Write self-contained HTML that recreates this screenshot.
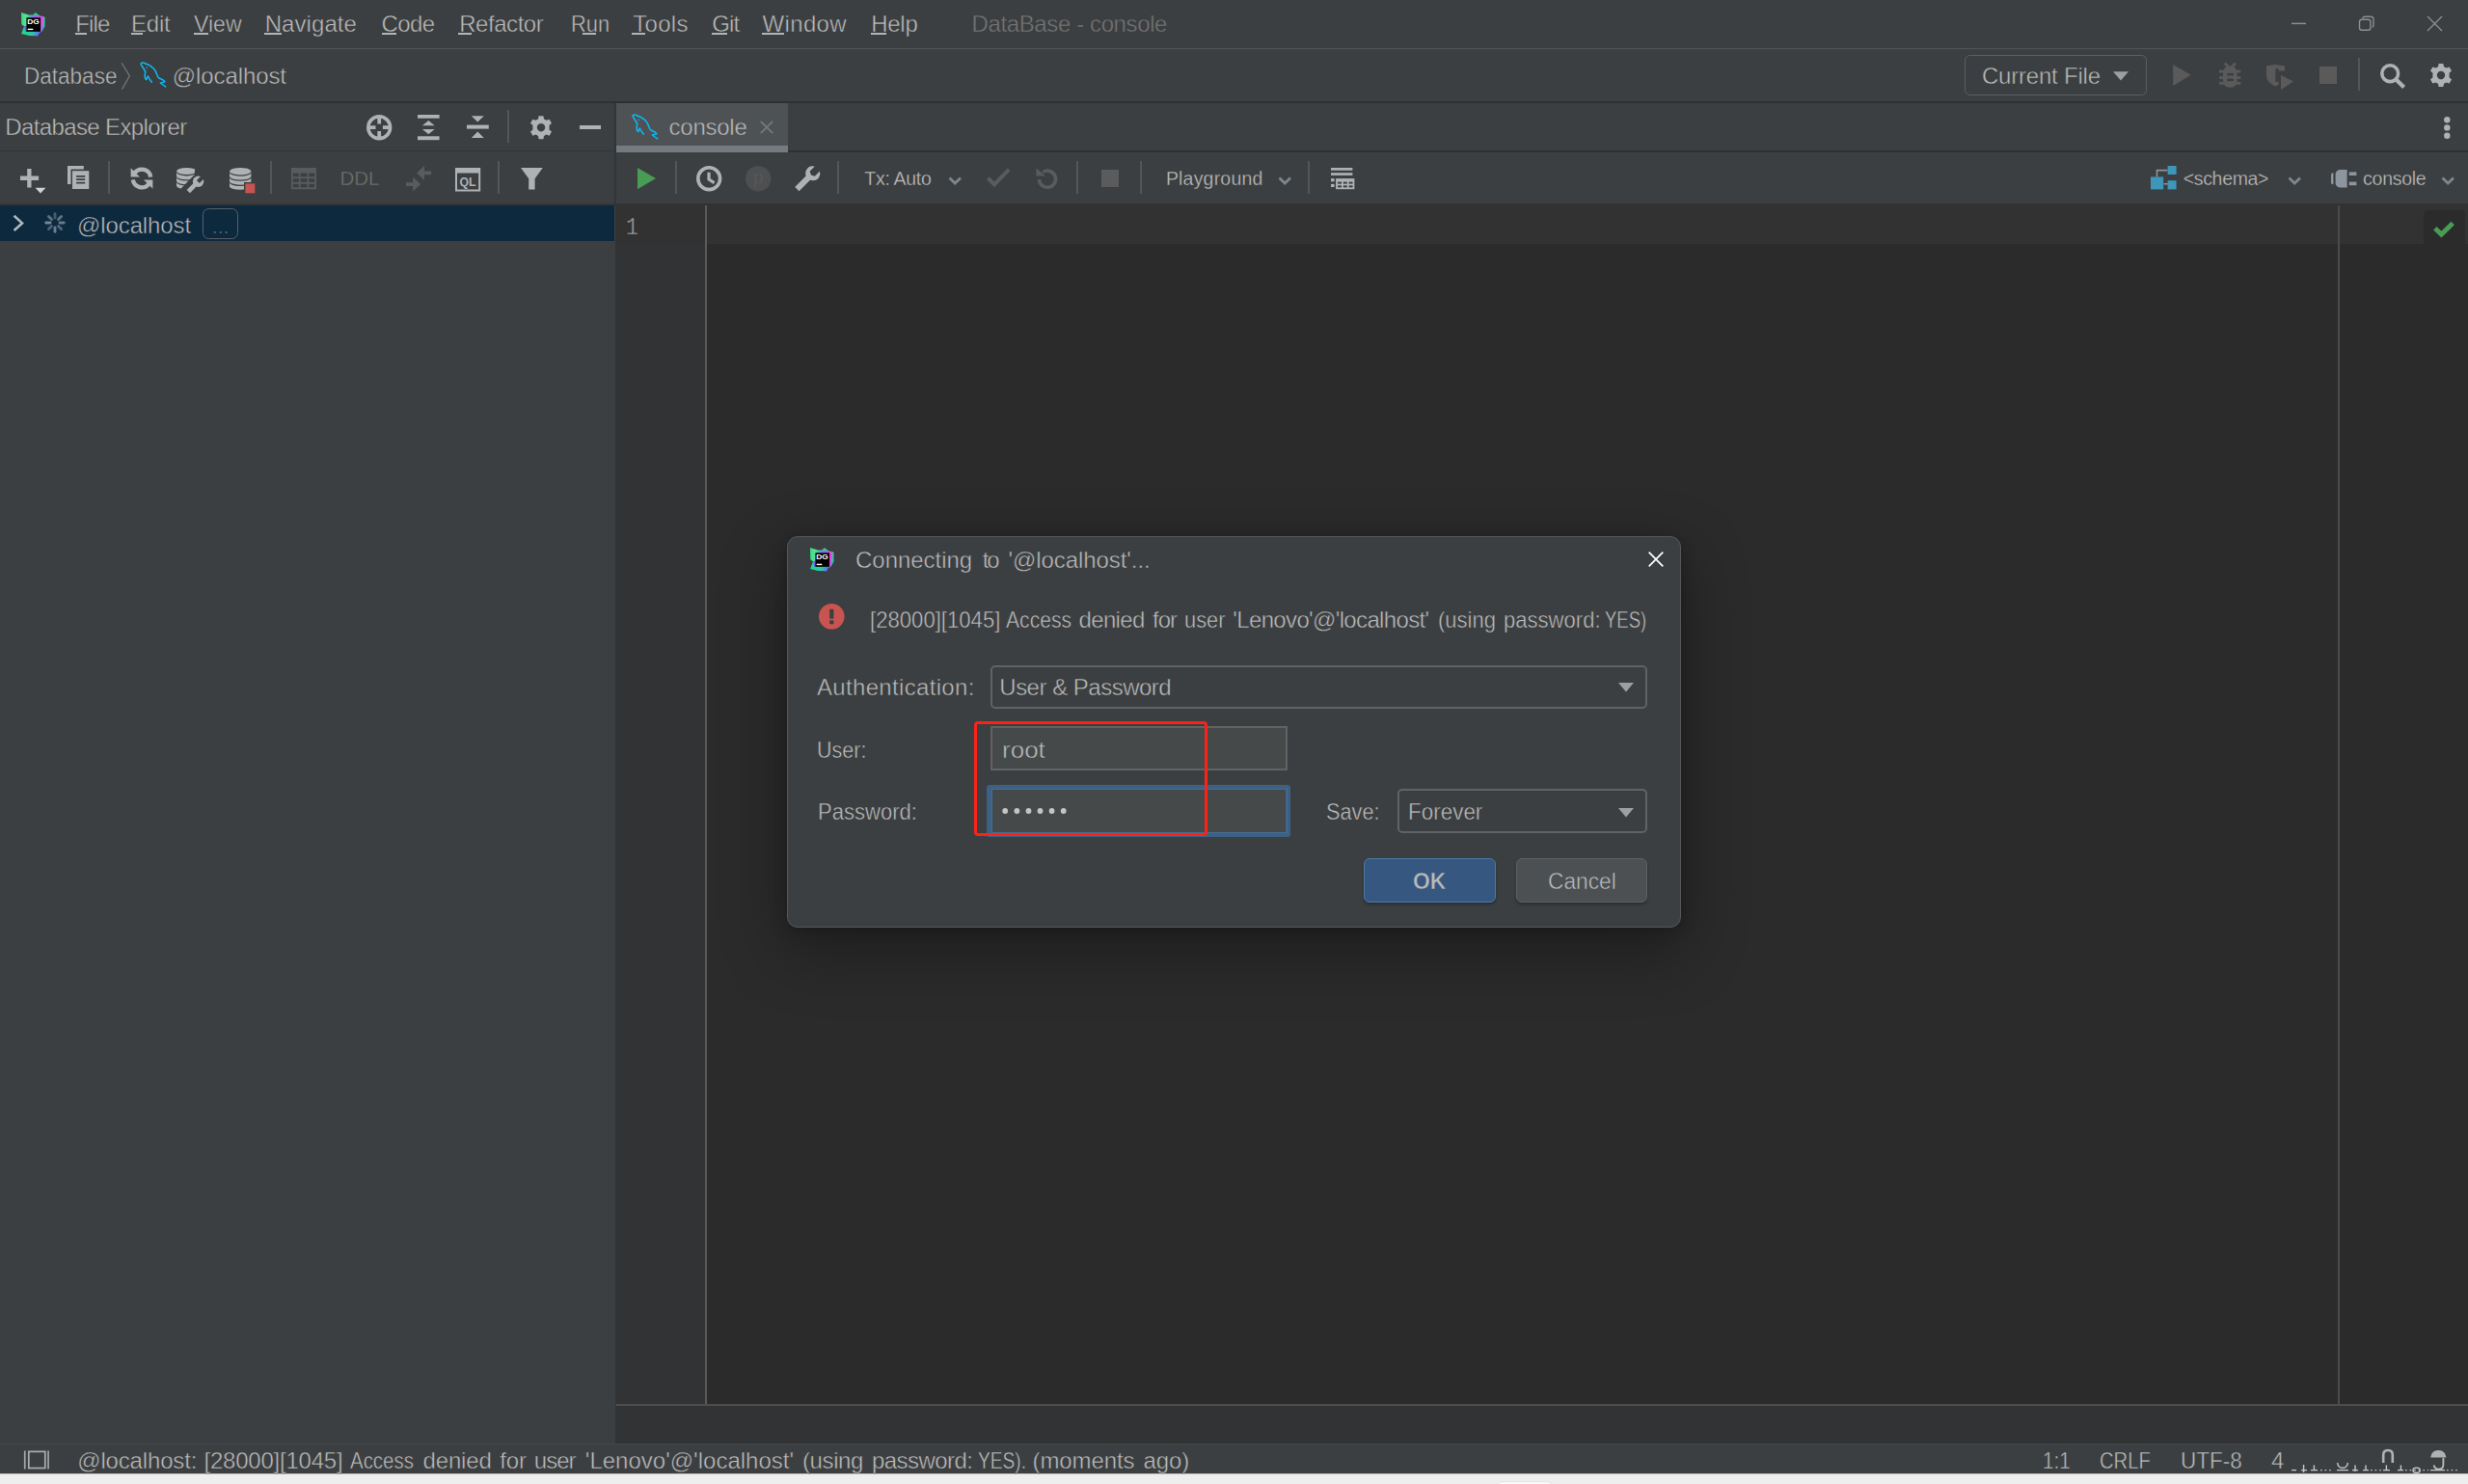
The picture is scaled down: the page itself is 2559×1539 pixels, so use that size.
<!DOCTYPE html>
<html><head><meta charset="utf-8"><title>DataBase - console</title>
<style>
html,body{margin:0;padding:0;background:#3c3f41;}
body{width:2559px;height:1539px;overflow:hidden;font-family:"Liberation Sans",sans-serif;}
#root{position:relative;width:2559px;height:1539px;overflow:hidden;background:#3c3f41;}
#root div,#root svg,#root span{position:absolute;}
.t{white-space:pre;line-height:1;}
.t u{text-decoration:underline;text-decoration-thickness:1.8px;text-underline-offset:1.2px;text-decoration-skip-ink:none;}
.sep{width:2px;background:#555555;}
svg{overflow:visible;}

</style></head>
<body>
<div id="root">
<!-- ===== frame lines ===== -->
<div style="left:0;top:49.7px;width:2559px;height:1.5px;background:#525456"></div>
<div style="left:0;top:105px;width:2559px;height:2px;background:#2e3032"></div>
<!-- left panel -->
<div style="left:0;top:156.1px;width:637px;height:1.3px;background:#323436"></div>
<div style="left:0;top:210.5px;width:637px;height:2.5px;background:#323436"></div>
<div style="left:0;top:213px;width:637px;height:37px;background:#0d293e"></div>
<div style="left:637px;top:107px;width:2px;height:105.5px;background:#323436"></div>
<!-- editor area -->
<div style="left:639px;top:107px;width:1920px;height:49px;background:#3c3f41"></div>
<div style="left:639px;top:107px;width:178px;height:51px;background:#4e5254"></div>
<div style="left:639px;top:151px;width:178px;height:7px;background:#747a80"></div>
<div style="left:817px;top:156px;width:1742px;height:2px;background:#2e3032"></div>
<div style="left:637.8px;top:211px;width:1921.2px;height:1246px;background:#2b2b2b"></div>
<div style="left:637.8px;top:211px;width:94.2px;height:1246px;background:#313335"></div>
<div style="left:637.8px;top:211px;width:94.2px;height:42px;background:#323233"></div>
<div style="left:733px;top:211px;width:1826px;height:42px;background:#323232"></div>
<div style="left:731px;top:213px;width:2px;height:1244px;background:#5a5a5a"></div>
<div style="left:2424px;top:213px;width:2px;height:1244px;background:#4b4b4b"></div>
<div style="left:639px;top:1456px;width:1920px;height:2px;background:#4d4d4d"></div>
<div style="left:637.8px;top:1458px;width:1921.2px;height:39px;background:#313335"></div>
<!-- inspection widget -->
<div style="left:2512.6px;top:217.6px;width:43.7px;height:35.6px;background:#2b2b2b;border-radius:5px 5px 0 0"></div>
<svg style="left:2520px;top:225px" width="30" height="26" viewBox="0 0 30 26"><path d="M4.8,11.7 L11.4,18 L23.2,6.5" fill="none" stroke="#499c54" stroke-width="5"/></svg>
<!-- status bar -->
<div style="left:0;top:1497px;width:2559px;height:31px;background:#3c3f41"></div>
<div style="left:0;top:1497.2px;width:2559px;height:1.2px;background:#44474a"></div>
<div style="left:0;top:1527.7px;width:2559px;height:11.3px;background:#eeeeee"></div>
<div style="left:0;top:1527.6px;width:2559px;height:1.8px;background:#bdbdbd"></div>
<div style="left:1552.8px;top:1536.3px;width:56px;height:8px;background:#f8f8f8;border:1px solid #e4e4e4;border-radius:4px;box-sizing:border-box"></div>

<!-- ===== DG logo (title) ===== -->
<svg style="left:21.7px;top:12.9px" width="24.5" height="24.3" viewBox="0 0 24.5 24.3">
<defs>
<linearGradient id="lgA" x1="0" y1="0" x2="1" y2="0"><stop offset="0" stop-color="#38dc86"/><stop offset="0.2" stop-color="#5ee090"/><stop offset="0.45" stop-color="#21d789"/><stop offset="1" stop-color="#21d789"/></linearGradient>
<linearGradient id="lgB" x1="0" y1="0" x2="1" y2="0"><stop offset="0" stop-color="#21d789"/><stop offset="0.55" stop-color="#2fc3ac"/><stop offset="0.8" stop-color="#5a78f5"/><stop offset="1" stop-color="#6b57ff"/></linearGradient>
<linearGradient id="lgC" x1="0" y1="0" x2="1" y2="0"><stop offset="0" stop-color="#21d789" stop-opacity="0"/><stop offset="0.35" stop-color="#8a7aec"/><stop offset="0.7" stop-color="#b552f2"/><stop offset="1" stop-color="#e244f0"/></linearGradient>
<linearGradient id="lgD" x1="0" y1="0" x2="0" y2="1"><stop offset="0" stop-color="#f640f2"/><stop offset="1" stop-color="#c455f2"/></linearGradient>
<linearGradient id="lgE" x1="0" y1="0" x2="0" y2="1"><stop offset="0" stop-color="#21d789"/><stop offset="0.6" stop-color="#2bc9a0"/><stop offset="1" stop-color="#5a7df5"/></linearGradient>
<g id="dglogo">
<path d="M0,0 L8.1,2.4 L12.3,2.5 L14.7,0.1 L19.5,3.4 L23.3,4.2 L24.3,5 L24.3,14.6 L21.5,19.6 L6,19.8 L3,14.2 L0.3,12.3Z" fill="url(#lgA)"/>
<path d="M23.2,4.3 L24.4,5.1 L24.3,14.6 L21.8,19 L22.6,12Z" fill="url(#lgE)"/>
<path d="M3,14.2 L0.1,21.9 L8.1,23.9 L17.3,24.2 L18.3,21.7 L21.5,19.6 L5.4,19.2 L5.4,14Z" fill="url(#lgB)"/>
<path d="M3.1,14.3 L5.6,13.6 L5.6,19.9 L4.2,19.4Z" fill="#7358fa"/>
<path d="M6,3.2 L12.3,2.6 L20,3.8 L20.4,5.7 L6,5.7Z" fill="url(#lgC)"/>
<path d="M20,4.2 L23.4,4.3 L22.6,12 L21.4,19.6 L20,19.9Z" fill="url(#lgD)"/>
<rect x="5.4" y="5.3" width="14.7" height="14.5" fill="#000"/>
<text x="6.3" y="12" font-family="Liberation Sans" font-weight="700" font-size="7.2" fill="#fff" textLength="12.6" lengthAdjust="spacingAndGlyphs">DG</text>
<rect x="6.7" y="16.7" width="5.6" height="1.4" fill="#fff"/>
</g>
</defs>
<use href="#dglogo"/>
</svg>

<!-- mnemonic underlines -->
<div style="left:78px;top:34.2px;width:12.1px;height:1.8px;background:#b4b4b4"></div>
<div style="left:135.9px;top:34.2px;width:11.9px;height:1.8px;background:#b4b4b4"></div>
<div style="left:201px;top:34.2px;width:14.9px;height:1.8px;background:#b4b4b4"></div>
<div style="left:274px;top:34.2px;width:17.7px;height:1.8px;background:#b4b4b4"></div>
<div style="left:396px;top:34.2px;width:14.7px;height:1.8px;background:#b4b4b4"></div>
<div style="left:475.4px;top:34.2px;width:13.3px;height:1.8px;background:#b4b4b4"></div>
<div style="left:604.1px;top:34.2px;width:13.6px;height:1.8px;background:#b4b4b4"></div>
<div style="left:655.1px;top:34.2px;width:13.9px;height:1.8px;background:#b4b4b4"></div>
<div style="left:738.1px;top:34.2px;width:15.8px;height:1.8px;background:#b4b4b4"></div>
<div style="left:790px;top:34.2px;width:22.9px;height:1.8px;background:#b4b4b4"></div>
<div style="left:903px;top:34.2px;width:16px;height:1.8px;background:#b4b4b4"></div>
<!-- window controls -->
<svg style="left:2374px;top:14px" width="170" height="22" viewBox="0 0 170 22">
<path d="M2,10.4 H17" stroke="#8c8e90" stroke-width="1.5" fill="none"/>
<rect x="72.5" y="6.3" width="11.4" height="11" rx="2.5" fill="none" stroke="#8c8e90" stroke-width="1.4"/>
<path d="M76,5.6 V5.2 Q76,3.2 78.4,3.2 H84.2 Q87,3.2 87,6 V12 Q87,13.8 85.6,14.2" fill="none" stroke="#8c8e90" stroke-width="1.4"/>
<path d="M143,3 L158,18 M158,3 L143,18" stroke="#8c8e90" stroke-width="1.3" fill="none"/>
</svg>

<!-- nav bar -->
<svg style="left:124px;top:63px" width="14" height="32" viewBox="0 0 14 32"><path d="M2.2,2.4 L10.4,15.7 L2.5,29.6" fill="none" stroke="#6e7173" stroke-width="1.4"/></svg>
<svg class="dolph" style="left:144.5px;top:64.4px" width="28" height="27" viewBox="0 0 28 27"><path d="M1.1,1.9 Q2.5,0.6 4.5,1.2 Q6.5,2.3 8.4,3 Q10.8,4 12.6,5.6 Q14.6,7.2 15.9,9.2 Q17,11.2 17.8,13.4 Q18.4,15.4 19.4,16.6 Q20.8,17.6 22.7,18.3 Q24.8,19.3 25.9,20.7 L21.4,22 Q24,24 26.7,25.9 M1.1,1.9 Q1.2,3 1.9,4 L3.9,7.2 L5.8,10.5 Q5.2,12.5 5.2,14.4 Q5.2,16.2 5.7,17.6 Q6.2,18.4 6.8,18.6 Q7.5,16.6 8.4,15 Q9.2,16.6 10,17.9 L12.3,21.2" fill="none" stroke="#0db7f4" stroke-width="1.55" stroke-linejoin="round" stroke-linecap="round"/><circle cx="7.3" cy="6.3" r="0.8" fill="#0db7f4"/></svg>

<!-- Current File box + run toolbar -->
<div style="left:2037.3px;top:57.2px;width:188.6px;height:41.5px;box-sizing:border-box;border:1.9px solid #5c5f61;border-radius:5.5px"></div>
<svg style="left:2190px;top:74px" width="18" height="10" viewBox="0 0 18 10"><path d="M1,0.3 H17 L9,9.6Z" fill="#9da0a3"/></svg>
<svg style="left:2253px;top:66px" width="20" height="24" viewBox="0 0 20 24"><path d="M0.2,0.9 L18.8,11.8 L0.2,23Z" fill="#5a5a5a"/></svg>
<!-- bug -->
<svg style="left:2301.2px;top:64.9px" width="22.3" height="25.7" viewBox="0 0 22.3 25.7" fill="#5a5a5a">
<path d="M5.7,0.4 L10.1,4.9 M17,0.4 L12.6,4.9" stroke="#5a5a5a" stroke-width="2.8" fill="none"/>
<path d="M4,12 Q4,3.6 11.25,3.6 Q18.5,3.6 18.5,12 V18 Q18.5,25.7 11.25,25.7 Q4,25.7 4,18Z"/>
<rect x="0" y="7.7" width="22.3" height="2.8"/><rect x="0" y="14.2" width="22.3" height="2.8"/><rect x="0" y="19.9" width="22.3" height="2.8"/>
<rect x="8.1" y="10.9" width="6.9" height="2.5" fill="#3c3f41"/><rect x="8.1" y="16.6" width="6.9" height="2.5" fill="#3c3f41"/>
</svg>
<!-- coverage -->
<svg style="left:2349.8px;top:66.9px" width="28" height="26" viewBox="0 0 28 26" fill="#5a5a5a">
<path d="M0,1.3 Q5,1 9.3,0 Q14,1 19,1.3 V6.6 H12.6 V4.2 H9.3 V17.8 H12.6 V20.8 Q11,22 9.3,22.4 Q0,18.5 0,11Z"/>
<path d="M15,10.9 L28,17.4 L15,25.9Z"/>
</svg>
<div style="left:2404.9px;top:68.8px;width:18.2px;height:18.4px;background:#5a5a5a"></div>
<div class="sep" style="left:2445px;top:60px;height:34px;width:1.5px"></div>
<svg style="left:2466.5px;top:64.7px" width="28" height="28" viewBox="0 0 28 28"><circle cx="11.2" cy="11.2" r="8.4" fill="none" stroke="#afb1b3" stroke-width="3.6"/><path d="M17.2,17.2 L25.6,25.6" stroke="#afb1b3" stroke-width="4.2"/></svg>
<svg style="left:2519px;top:66px" width="24" height="24" viewBox="0 0 24 24"><use href="#gear"/></svg>

<!-- ===== Database Explorer header icons ===== -->
<svg width="0" height="0" style="left:0;top:0"><defs>
<path id="gear" fill="#afb1b3" fill-rule="evenodd" d="M9.6,0 H14.4 L15,3.3 Q16.3,3.8 17.4,4.6 L20.6,3.5 L23,7.6 L20.5,9.8 Q20.7,11 20.5,14.2 L23,16.4 L20.6,20.5 L17.4,19.4 Q16.3,20.2 15,20.7 L14.4,24 H9.6 L9,20.7 Q7.7,20.2 6.6,19.4 L3.4,20.5 L1,16.4 L3.5,14.2 Q3.3,12 3.5,9.8 L1,7.6 L3.4,3.5 L6.6,4.6 Q7.7,3.8 9,3.3Z M12,7.8 A4.2,4.2 0 1 0 12.01,7.8Z"/>
<path id="chev" d="M1.5,1.5 L7.2,7 L13,1.5" fill="none" stroke="#7c8791" stroke-width="2.8"/>
</defs></svg>
<svg style="left:379.9px;top:119px" width="26.4" height="26.4" viewBox="0 0 26.4 26.4"><circle cx="13.2" cy="13.2" r="11.4" fill="none" stroke="#afb1b3" stroke-width="3.6"/><path d="M13.2,2 V9.5 M13.2,16.9 V24.4 M2,13.2 H9.5 M16.9,13.2 H24.4" stroke="#afb1b3" stroke-width="3.7"/></svg>
<svg style="left:432.8px;top:119px" width="22.6" height="26.2" viewBox="0 0 22.6 26.2" fill="#afb1b3"><rect x="0" y="0" width="22.6" height="3.7"/><rect x="0" y="22.3" width="22.6" height="3.9"/><path d="M11.3,6 L17.7,11.2 H4.9Z M4.9,15.1 H17.7 L11.3,20.3Z"/></svg>
<svg style="left:483.7px;top:120.2px" width="22.8" height="23" viewBox="0 0 22.8 23" fill="#afb1b3"><rect x="0" y="9.6" width="22.8" height="4"/><path d="M4.8,0.2 H17.8 L11.3,6.6Z M11.3,16.4 L17.8,22.9 H4.8Z"/></svg>
<div class="sep" style="left:526px;top:114px;height:34px;width:1.6px"></div>
<svg style="left:549px;top:120px" width="24" height="24.4" viewBox="0 0 24 24"><use href="#gear"/></svg>
<div style="left:600.8px;top:130.1px;width:22.4px;height:4px;background:#afb1b3"></div>

<!-- ===== Explorer toolbar ===== -->
<svg style="left:20.6px;top:175.3px" width="28" height="27" viewBox="0 0 28 27"><path d="M0,7.6 H19.1 V11.9 H0Z M7.2,0 H11.5 V19.4 H7.2Z" fill="#afb1b3"/><path d="M15.6,19.7 H26.4 L21,25.6Z" fill="#d2d2d2"/></svg>
<svg style="left:69.9px;top:171.8px" width="22.5" height="24.2" viewBox="0 0 22.5 24.2"><path d="M0,0 H16.8 V3.5 H3.5 V19 H0Z" fill="#afb1b3"/><rect x="5" y="5.2" width="17.3" height="18.8" fill="#afb1b3"/><path d="M9.1,10.8 H18.2 M9.1,14.2 H18.2 M9.1,17.6 H18.2" stroke="#3c3f41" stroke-width="1.8"/></svg>
<div class="sep" style="left:112.2px;top:167px;height:34px;width:1.6px"></div>
<!-- refresh -->
<svg style="left:135px;top:173px" width="24" height="24" viewBox="-12 -12 24 24"><g id="rfh"><path d="M9.23,-1.46 A9.35,9.35 0 0 0 -7.4,-5.7" fill="none" stroke="#afb1b3" stroke-width="4.3"/><path d="M-11.4,-10.7 V-1.5 H-2Z" fill="#afb1b3"/></g><use href="#rfh" transform="rotate(180)"/></svg>
<!-- db wrench -->
<svg style="left:182.7px;top:173.5px" width="30" height="27" viewBox="0 0 30 27"><defs><clipPath id="cw"><path d="M-1,-1 H19.3 L18.6,7.2 L3.2,23 H-1Z"/></clipPath></defs><g fill="#afb1b3" clip-path="url(#cw)"><ellipse cx="10.5" cy="3.55" rx="10.5" ry="3.55"/><path d="M0,4.85 A10.5,3.55 0 0 0 21.0,4.85 V8.65 A10.5,3.55 0 0 1 0,8.65Z"/><path d="M0,9.95 A10.5,3.55 0 0 0 21.0,9.95 V13.75 A10.5,3.55 0 0 1 0,13.75Z"/><path d="M0,15.05 A10.5,3.55 0 0 0 21.0,15.05 V18.85 A10.5,3.55 0 0 1 0,18.85Z"/></g>
<path d="M12.3,24.6 L21.4,15.4" stroke="#afb1b3" stroke-width="4.6" fill="none"/><circle cx="22.6" cy="14.2" r="5.7" fill="#afb1b3"/><path d="M22.4,14.4 L28.4,8.4" stroke="#3c3f41" stroke-width="4.2" fill="none"/></svg>
<!-- db stop -->
<svg style="left:237.6px;top:173.5px" width="27" height="27" viewBox="0 0 27 27"><g fill="#afb1b3"><ellipse cx="11.2" cy="3.7" rx="11.2" ry="3.7"/><path d="M0,5.00 A11.2,3.7 0 0 0 22.4,5.00 V8.85 A11.2,3.7 0 0 1 0,8.85Z"/><path d="M0,10.15 A11.2,3.7 0 0 0 22.4,10.15 V14.00 A11.2,3.7 0 0 1 0,14.00Z"/><path d="M0,15.30 A11.2,3.7 0 0 0 22.4,15.30 V19.15 A11.2,3.7 0 0 1 0,19.15Z"/></g><rect x="15" y="15" width="12" height="12" fill="#3c3f41"/><rect x="16.4" y="16.4" width="9.9" height="9.9" fill="#c75450"/></svg>
<div class="sep" style="left:280px;top:167px;height:34px;width:1.6px"></div>
<!-- table disabled -->
<svg style="left:302px;top:173.9px" width="26" height="22.2" viewBox="0 0 26 22.2"><rect width="26" height="22.2" fill="#595b5d"/><g fill="#3c3f41"><rect x="1.8" y="5.6" width="6" height="3.6"/><rect x="9.6" y="5.6" width="6.8" height="3.6"/><rect x="18.2" y="5.6" width="6" height="3.6"/><rect x="1.8" y="11.2" width="6" height="3.6"/><rect x="9.6" y="11.2" width="6.8" height="3.6"/><rect x="18.2" y="11.2" width="6" height="3.6"/><rect x="1.8" y="16.8" width="6" height="3.6"/><rect x="9.6" y="16.8" width="6.8" height="3.6"/><rect x="18.2" y="16.8" width="6" height="3.6"/></g></svg>
<!-- arrows disabled -->
<svg style="left:421px;top:171.8px" width="26.2" height="26.4" viewBox="0 0 26.2 26.4" fill="#595b5d"><path d="M26.2,5.4 H19 V0 L11,7.4 L19,14.8 V9.2 H26.2Z"/><path d="M0,17.2 H7.2 V11.6 L15.2,19 L7.2,26.4 V21 H0Z"/></svg>
<!-- QL -->
<svg style="left:471.9px;top:173.9px" width="26.2" height="24.4" viewBox="0 0 26.2 24.4"><path d="M0,0 H26.2 V24.4 H0Z M2,5.6 V22.4 H24.2 V5.6Z" fill="#afb1b3" fill-rule="evenodd"/><text x="4.6" y="19" font-family="Liberation Sans" font-weight="700" font-size="12.3" fill="#afb1b3" textLength="17" lengthAdjust="spacingAndGlyphs">QL</text></svg>
<div class="sep" style="left:516px;top:167px;height:34px;width:1.6px"></div>
<!-- funnel -->
<svg style="left:539.7px;top:173.9px" width="22.8" height="22.4" viewBox="0 0 22.8 22.4"><path d="M0,0 H22.8 L14.6,11.2 V22.4 H8.2 V11.2Z" fill="#afb1b3"/></svg>

<!-- ===== tree row ===== -->
<svg style="left:12px;top:221px" width="14" height="20" viewBox="0 0 14 20"><path d="M2.6,2.8 L11,10.4 L2.6,18" fill="none" stroke="#b4b6b8" stroke-width="2.6"/></svg>
<svg style="left:45px;top:219px" width="24" height="24" viewBox="0 0 24 24" stroke-width="2.9" stroke-linecap="round" fill="none"><path d="M12.00,7.10 L12.00,2.80" stroke="#465c6e"/><path d="M15.46,8.54 L18.51,5.49" stroke="#5f7384"/><path d="M16.90,12.00 L21.20,12.00" stroke="#66798a"/><path d="M15.46,15.46 L18.51,18.51" stroke="#52667a"/><path d="M12.00,16.90 L12.00,21.20" stroke="#6b7d8c"/><path d="M8.54,15.46 L5.49,18.51" stroke="#4d6175"/><path d="M7.10,12.00 L2.80,12.00" stroke="#778896"/><path d="M8.54,8.54 L5.49,5.49" stroke="#5c7082"/></svg>
<div style="left:210px;top:215.9px;width:36.9px;height:32.3px;box-sizing:border-box;border:1.8px solid #566069;border-radius:6.5px"></div>

<!-- ===== editor tab ===== -->
<svg class="dolph" style="left:655px;top:117.9px" width="28" height="27" viewBox="0 0 28 27"><path d="M1.1,1.9 Q2.5,0.6 4.5,1.2 Q6.5,2.3 8.4,3 Q10.8,4 12.6,5.6 Q14.6,7.2 15.9,9.2 Q17,11.2 17.8,13.4 Q18.4,15.4 19.4,16.6 Q20.8,17.6 22.7,18.3 Q24.8,19.3 25.9,20.7 L21.4,22 Q24,24 26.7,25.9 M1.1,1.9 Q1.2,3 1.9,4 L3.9,7.2 L5.8,10.5 Q5.2,12.5 5.2,14.4 Q5.2,16.2 5.7,17.6 Q6.2,18.4 6.8,18.6 Q7.5,16.6 8.4,15 Q9.2,16.6 10,17.9 L12.3,21.2" fill="none" stroke="#0db7f4" stroke-width="1.55" stroke-linejoin="round" stroke-linecap="round"/><circle cx="7.3" cy="6.3" r="0.8" fill="#0db7f4"/></svg>
<svg style="left:788px;top:125.4px" width="14" height="14" viewBox="0 0 14 14"><path d="M0.8,0.8 L13.2,13.2 M13.2,0.8 L0.8,13.2" stroke="#6f7c7d" stroke-width="1.8" fill="none"/></svg>
<svg style="left:2533.8px;top:120.6px" width="6.6" height="23" viewBox="0 0 6.6 23" fill="#afb1b3"><circle cx="3.3" cy="3.2" r="3.2"/><circle cx="3.3" cy="11.4" r="3.2"/><circle cx="3.3" cy="19.8" r="3.2"/></svg>

<!-- ===== editor toolbar ===== -->
<svg style="left:661.2px;top:173.9px" width="19" height="22.2" viewBox="0 0 19 22.2"><path d="M0,0 L19,11.1 L0,22.2Z" fill="#499c54"/></svg>
<div class="sep" style="left:700px;top:167px;height:34px;width:1.6px"></div>
<svg style="left:721.9px;top:171.8px" width="26.4" height="26.4" viewBox="0 0 26.4 26.4"><circle cx="13.2" cy="13.2" r="11.4" fill="none" stroke="#afb1b3" stroke-width="3.6"/><path d="M13,6.8 V14 L18.6,17.6" fill="none" stroke="#afb1b3" stroke-width="3.2"/></svg>
<svg style="left:772.8px;top:171.8px" width="26.4" height="26.4" viewBox="0 0 26.4 26.4"><circle cx="13.2" cy="13.2" r="13.2" fill="#4d4f51"/><text x="8" y="18.2" font-family="Liberation Sans" font-size="19" fill="#56585a">p</text></svg>
<!-- wrench -->
<svg style="left:823.9px;top:171.8px" width="26.4" height="26.4" viewBox="0 0 26.4 26.4"><path d="M0.2,22 L11.6,10.6 Q10,4.4 15,1 Q17.6,-0.4 20.8,0.6 L15.6,5.8 L17,9.6 L20.8,10.8 L26,5.6 Q27,9.2 25.2,12 Q22,16.4 16,14.8 L4.6,26.2Z" fill="#afb1b3"/></svg>
<div class="sep" style="left:868px;top:167px;height:34px;width:1.6px"></div>
<svg style="left:983px;top:182.8px" width="14.6" height="9.6" viewBox="0 0 14.6 9.6"><use href="#chev"/></svg>
<svg style="left:1023.1px;top:174.3px" width="24.8" height="19.8" viewBox="0 0 24.8 19.8"><path d="M1.4,10.6 L8,17.4 L23.2,1.6" fill="none" stroke="#595b5d" stroke-width="4"/></svg>
<svg style="left:1073.5px;top:174px" width="23" height="22" viewBox="0 0 23 22"><path d="M3.4,12.2 A8.6,8.6 0 1 0 7.4,4.4" fill="none" stroke="#595b5d" stroke-width="3.6"/><path d="M0.4,0.2 L10,8.6 H0.4Z" fill="#595b5d"/></svg>
<div class="sep" style="left:1116.3px;top:167px;height:34px;width:1.6px"></div>
<div style="left:1142px;top:175.9px;width:18.4px;height:18.3px;background:#595b5d"></div>
<div class="sep" style="left:1182.1px;top:167px;height:34px;width:1.6px"></div>
<svg style="left:1325px;top:182.8px" width="14.6" height="9.6" viewBox="0 0 14.6 9.6"><use href="#chev"/></svg>
<div class="sep" style="left:1356.2px;top:167px;height:34px;width:1.6px"></div>
<svg style="left:1379.7px;top:173.9px" width="24.4" height="22.2" viewBox="0 0 24.4 22.2"><g fill="#afb1b3"><rect x="0" y="0" width="22.4" height="2.7"/><rect x="0" y="5.2" width="22.4" height="2.7"/><rect x="0" y="11.1" width="3.6" height="3.2"/><rect x="0" y="16.9" width="3.6" height="3.1"/><rect x="5.1" y="11.1" width="19.3" height="11.1"/></g><g fill="#3c3f41"><rect x="7" y="14.6" width="4" height="2"/><rect x="12.8" y="14.6" width="4" height="2"/><rect x="18.6" y="14.6" width="4" height="2"/><rect x="7" y="18.4" width="4" height="2"/><rect x="12.8" y="18.4" width="4" height="2"/><rect x="18.6" y="18.4" width="4" height="2"/></g></svg>
<!-- schema icon -->
<svg style="left:2229.8px;top:172px" width="26.6" height="24.4" viewBox="0 0 26.6 24.4"><path d="M6.5,11.5 V4.6 H17.5 M13.6,18.8 H19" fill="none" stroke="#8d9499" stroke-width="1.6"/><rect x="17.6" y="0" width="9" height="9" fill="#3e96b9"/><rect x="0" y="11.4" width="13.2" height="13" fill="#3e96b9"/><rect x="17.6" y="15.2" width="9" height="9.2" fill="#3e96b9"/></svg>
<svg style="left:2371.7px;top:183px" width="14.6" height="9.6" viewBox="0 0 14.6 9.6"><use href="#chev"/></svg>
<!-- plug icon -->
<svg style="left:2417px;top:175.5px" width="26.4" height="18.6" viewBox="0 0 26.4 18.6" fill="#8d969e"><path d="M0,5 Q0,3.4 2.4,3.2 V15.4 Q0,15.2 0,13.6Z"/><path d="M4.6,4 Q5.4,0.6 9,0 H16.6 V18.6 H9 Q5.4,18 4.6,14.6Z"/><rect x="18.8" y="2.4" width="7.6" height="3.6"/><rect x="18.8" y="12.6" width="7.6" height="3.6"/></svg>
<svg style="left:2530.7px;top:183px" width="14.6" height="9.6" viewBox="0 0 14.6 9.6"><use href="#chev"/></svg>

<!-- ===== status bar icons ===== -->
<svg style="left:24px;top:1504px" width="28" height="20" viewBox="0 0 28 20"><path d="M1.75,0.5 V19.4 M26.05,0.5 V19.4" stroke="#a4a6a8" stroke-width="1.7"/><rect x="5.8" y="1.4" width="17" height="17.1" fill="none" stroke="#a9abad" stroke-width="1.75"/></svg>
<!-- clipped right-side fragments -->
<svg style="left:2370px;top:1500px" width="180" height="28" viewBox="0 0 180 28">
<path d="M101.2,17 V9 Q101.2,4 106,4 Q110.8,4 110.8,9 V17" fill="none" stroke="#afb1b3" stroke-width="2.6"/>
<path d="M150.2,11.6 Q151,4 158.2,4 Q165.6,4 166.4,11.6Z" fill="#afb1b3"/>
<path d="M163.4,12 V19 Q163.4,23.6 158.6,23.6 Q154.4,23.6 153.6,19.5" fill="none" stroke="#bbbbbb" stroke-width="1.8"/>
<path d="M53.6,17 Q54.4,22.4 59,22.4 Q63.6,22.4 64.4,17" fill="none" stroke="#bbbbbb" stroke-width="1.6"/>
<path d="M6,24.6 H11 M16,24.6 H22 M26,24.6 H33 M53,24.6 H65 M69,24.6 H75 M80,24.6 H86 M101,24.6 H108 M116,24.6 H122 M150,24.6 H165" stroke="#c8c8c8" stroke-width="1.4"/>
<path d="M18.6,19 V27 M29.4,19.6 V24.6 M72,19.6 V26 M83,19.6 V24.6 M104.4,19.6 V24.6 M119.4,19.6 V24.6" stroke="#c8c8c8" stroke-width="1.4"/>
<path d="M36,24.6 H48 M88,24.6 H100 M124,24.6 H148 M167,24.6 H178" stroke="#c8c8c8" stroke-width="1.2" stroke-dasharray="1.6 3"/>
<ellipse cx="135.6" cy="24.8" rx="3.6" ry="2.6" fill="none" stroke="#d0d0d0" stroke-width="1.3"/>
</svg>

<!-- ===== dialog ===== -->
<div id="dlg" style="left:816px;top:556px;width:927px;height:406px;background:#3c3f41;border:1.3px solid #55585a;border-radius:11px;box-sizing:border-box;box-shadow:0 22px 64px 6px rgba(0,0,0,0.30),0 3px 16px rgba(0,0,0,0.20)"></div>
<!-- dialog logo -->
<svg style="left:839.8px;top:567.6px" width="24.5" height="24.3" viewBox="0 0 24.5 24.3"><use href="#dglogo"/></svg>
<svg style="left:1709px;top:572px" width="16" height="16" viewBox="0 0 16 16"><path d="M0.7,0.7 L15.3,15.3 M15.3,0.7 L0.7,15.3" stroke="#ffffff" stroke-width="1.7" fill="none"/></svg>
<!-- error icon -->
<svg style="left:848.6px;top:625.6px" width="26.6" height="26.6" viewBox="0 0 26.6 26.6"><circle cx="13.3" cy="13.3" r="13.3" fill="#c75450"/><rect x="11.2" y="5.8" width="4.2" height="9.8" fill="#3c3f41"/><rect x="11.2" y="17.4" width="4.2" height="3.8" fill="#3c3f41"/></svg>
<!-- auth combo -->
<div style="left:1027px;top:689.5px;width:680.8px;height:45px;box-sizing:border-box;border:2px solid #606263;border-radius:5px;background:#3c3f41"></div>
<svg style="left:1678px;top:708.4px" width="16" height="9.4" viewBox="0 0 16 9.4"><path d="M0,0 H16 L8,9.4Z" fill="#9da0a3"/></svg>
<!-- user field -->
<div style="left:1027px;top:753.2px;width:307.8px;height:46.2px;box-sizing:border-box;border:2px solid #626262;background:#45494a"></div>
<!-- password field -->
<div style="left:1023.4px;top:814.2px;width:314.9px;height:53.4px;box-sizing:border-box;border:5px solid #3d6185;border-radius:3px;background:#45494a"></div>
<div style="left:1027.5px;top:818.2px;width:307px;height:45.4px;box-sizing:border-box;border:1.4px solid #466d94;background:transparent"></div>
<svg style="left:1036px;top:835px" width="72" height="12" viewBox="0 0 72 12" fill="#c4c4c4"><circle cx="6.2" cy="6" r="2.9"/><circle cx="18.4" cy="6" r="2.9"/><circle cx="30.5" cy="6" r="2.9"/><circle cx="42.5" cy="6" r="2.9"/><circle cx="54.6" cy="6" r="2.9"/><circle cx="66.7" cy="6" r="2.9"/></svg>
<!-- save combo -->
<div style="left:1448.8px;top:817.8px;width:259px;height:46.2px;box-sizing:border-box;border:2px solid #606263;border-radius:5px;background:#3c3f41"></div>
<svg style="left:1678px;top:838px" width="16" height="9.4" viewBox="0 0 16 9.4"><path d="M0,0 H16 L8,9.4Z" fill="#9da0a3"/></svg>
<!-- buttons -->
<div style="left:1414.2px;top:889.8px;width:136.5px;height:46.4px;box-sizing:border-box;border:1.6px solid #4c7aa5;border-radius:6px;background:#365880;box-shadow:0 2px 3px rgba(0,0,0,0.3)"></div>
<div style="left:1571.7px;top:889.8px;width:136.3px;height:46.4px;box-sizing:border-box;border:1.6px solid #5e6163;border-radius:6px;background:#4c5052;box-shadow:0 2px 3px rgba(0,0,0,0.3)"></div>
<!-- red annotation -->
<div style="left:1010px;top:748.2px;width:241.8px;height:118.8px;box-sizing:border-box;border:3px solid #fb2318;border-radius:4px"></div>

<!-- text -->
<span class="t" style="left:78.2px;top:12.7px;font-size:24px;letter-spacing:-0.837px;color:#bbbbbb;-webkit-text-stroke:0.45px #3c3f41;">File</span>
<span class="t" style="left:136.0px;top:12.7px;font-size:24px;letter-spacing:-0.233px;color:#bbbbbb;-webkit-text-stroke:0.45px #3c3f41;">Edit</span>
<span class="t" style="left:201.4px;top:12.7px;font-size:24px;letter-spacing:0.000px;color:#bbbbbb;transform:scaleX(0.9599);transform-origin:0 0;-webkit-text-stroke:0.45px #3c3f41;">View</span>
<span class="t" style="left:274.7px;top:12.7px;font-size:24px;letter-spacing:0.075px;color:#bbbbbb;-webkit-text-stroke:0.45px #3c3f41;">Navigate</span>
<span class="t" style="left:395.6px;top:12.7px;font-size:24px;letter-spacing:-0.605px;color:#bbbbbb;-webkit-text-stroke:0.45px #3c3f41;">Code</span>
<span class="t" style="left:476.2px;top:12.7px;font-size:24px;letter-spacing:-0.449px;color:#bbbbbb;-webkit-text-stroke:0.45px #3c3f41;">Refactor</span>
<span class="t" style="left:592.2px;top:12.7px;font-size:24px;letter-spacing:0.000px;color:#bbbbbb;transform:scaleX(0.9097);transform-origin:0 0;-webkit-text-stroke:0.45px #3c3f41;">Run</span>
<span class="t" style="left:656.3px;top:12.7px;font-size:24px;letter-spacing:0.282px;color:#bbbbbb;-webkit-text-stroke:0.45px #3c3f41;">Tools</span>
<span class="t" style="left:738.3px;top:12.7px;font-size:24px;letter-spacing:-0.906px;color:#bbbbbb;-webkit-text-stroke:0.45px #3c3f41;">Git</span>
<span class="t" style="left:790.6px;top:12.7px;font-size:24px;letter-spacing:0.320px;color:#bbbbbb;-webkit-text-stroke:0.45px #3c3f41;">Window</span>
<span class="t" style="left:903.2px;top:12.7px;font-size:24px;letter-spacing:-0.266px;color:#bbbbbb;-webkit-text-stroke:0.45px #3c3f41;">Help</span>
<span class="t" style="left:1007.5px;top:12.7px;font-size:24px;letter-spacing:-0.382px;color:#757575;-webkit-text-stroke:0.45px #3c3f41;">DataBase - console</span>
<span class="t" style="left:24.6px;top:66.7px;font-size:24px;letter-spacing:0.000px;color:#bbbbbb;transform:scaleX(0.9387);transform-origin:0 0;-webkit-text-stroke:0.45px #3c3f41;">Database</span>
<span class="t" style="left:178.8px;top:66.7px;font-size:24px;letter-spacing:-0.098px;color:#bbbbbb;-webkit-text-stroke:0.45px #3c3f41;">@localhost</span>
<span class="t" style="left:5.2px;top:119.6px;font-size:24px;letter-spacing:-0.614px;color:#bbbbbb;-webkit-text-stroke:0.45px #3c3f41;">Database Explorer</span>
<span class="t" style="left:80.1px;top:221.7px;font-size:24px;letter-spacing:-0.126px;color:#bbbbbb;-webkit-text-stroke:0.45px #0d293e;">@localhost</span>
<span class="t" style="left:220.3px;top:227.1px;font-size:18px;letter-spacing:0.852px;color:#7c8389;-webkit-text-stroke:0.27px #0d293e;">...</span>
<span class="t" style="left:352.4px;top:174.6px;font-size:20.5px;letter-spacing:0.027px;color:#6e6e6e;-webkit-text-stroke:0.27px #3c3f41;">DDL</span>
<span class="t" style="left:693.6px;top:119.9px;font-size:24px;letter-spacing:-0.262px;color:#bbbbbb;-webkit-text-stroke:0.45px #4e5254;">console</span>
<span class="t" style="left:896.3px;top:175.7px;font-size:19.5px;letter-spacing:-0.288px;color:#bbbbbb;-webkit-text-stroke:0.27px #3c3f41;">Tx: Auto</span>
<span class="t" style="left:1208.9px;top:175.7px;font-size:19.5px;letter-spacing:0.197px;color:#bbbbbb;-webkit-text-stroke:0.27px #3c3f41;">Playground</span>
<span class="t" style="left:2263.7px;top:175.7px;font-size:19.5px;letter-spacing:-0.319px;color:#bbbbbb;-webkit-text-stroke:0.27px #3c3f41;">&lt;schema&gt;</span>
<span class="t" style="left:2450.1px;top:175.7px;font-size:19.5px;letter-spacing:-0.281px;color:#bbbbbb;-webkit-text-stroke:0.27px #3c3f41;">console</span>
<span class="t" style="left:2054.9px;top:66.7px;font-size:24px;letter-spacing:-0.201px;color:#bbbbbb;-webkit-text-stroke:0.45px #3c3f41;">Current File</span>
<span class="t" style="left:648.7px;top:222.9px;font-size:26.5px;letter-spacing:0.000px;color:#a0a0a0;font-family:'Liberation Mono',monospace;transform:scaleX(0.8035);transform-origin:0 0;-webkit-text-stroke:0.45px #323233;">1</span>
<span class="t" style="left:887.1px;top:569.0px;font-size:24px;letter-spacing:-0.051px;color:#bbbbbb;-webkit-text-stroke:0.45px #3c3f41;">Connecting</span>
<span class="t" style="left:902.0px;top:631.1px;font-size:24px;letter-spacing:0.000px;color:#bbbbbb;transform:scaleX(0.9223);transform-origin:0 0;-webkit-text-stroke:0.45px #3c3f41;">[28000][1045]</span>
<span class="t" style="left:1043.4px;top:631.1px;font-size:24px;letter-spacing:0.000px;color:#bbbbbb;transform:scaleX(0.8797);transform-origin:0 0;-webkit-text-stroke:0.45px #3c3f41;">Access</span>
<span class="t" style="left:1118.5px;top:631.1px;font-size:24px;letter-spacing:-0.644px;color:#bbbbbb;-webkit-text-stroke:0.45px #3c3f41;">denied</span>
<span class="t" style="left:1195.1px;top:631.1px;font-size:24px;letter-spacing:-1.078px;color:#bbbbbb;-webkit-text-stroke:0.45px #3c3f41;">for</span>
<span class="t" style="left:1227.8px;top:631.1px;font-size:24px;letter-spacing:0.000px;color:#bbbbbb;transform:scaleX(0.9094);transform-origin:0 0;-webkit-text-stroke:0.45px #3c3f41;">user</span>
<span class="t" style="left:1278.3px;top:631.1px;font-size:24px;letter-spacing:-0.647px;color:#bbbbbb;-webkit-text-stroke:0.45px #3c3f41;">'Lenovo'@'localhost'</span>
<span class="t" style="left:1490.7px;top:631.1px;font-size:24px;letter-spacing:0.000px;color:#bbbbbb;transform:scaleX(0.9159);transform-origin:0 0;-webkit-text-stroke:0.45px #3c3f41;">(using</span>
<span class="t" style="left:1558.5px;top:631.1px;font-size:24px;letter-spacing:0.000px;color:#bbbbbb;transform:scaleX(0.9195);transform-origin:0 0;-webkit-text-stroke:0.45px #3c3f41;">password:</span>
<span class="t" style="left:1664.3px;top:631.1px;font-size:24px;letter-spacing:0.000px;color:#bbbbbb;transform:scaleX(0.7710);transform-origin:0 0;-webkit-text-stroke:0.45px #3c3f41;">YES)</span>
<span class="t" style="left:847.0px;top:700.5px;font-size:24px;letter-spacing:0.327px;color:#bbbbbb;-webkit-text-stroke:0.45px #3c3f41;">Authentication:</span>
<span class="t" style="left:1036.3px;top:700.5px;font-size:24px;letter-spacing:-0.502px;color:#bbbbbb;-webkit-text-stroke:0.45px #3c3f41;">User &amp; Password</span>
<span class="t" style="left:847.3px;top:766.0px;font-size:24px;letter-spacing:0.000px;color:#bbbbbb;transform:scaleX(0.8966);transform-origin:0 0;-webkit-text-stroke:0.45px #3c3f41;">User:</span>
<span class="t" style="left:1039.0px;top:766.0px;font-size:24px;letter-spacing:0.000px;color:#bbbbbb;transform:scaleX(1.0842);transform-origin:0 0;-webkit-text-stroke:0.45px #45494a;">root</span>
<span class="t" style="left:848.1px;top:829.8px;font-size:24px;letter-spacing:0.000px;color:#bbbbbb;transform:scaleX(0.9192);transform-origin:0 0;-webkit-text-stroke:0.45px #3c3f41;">Password:</span>
<span class="t" style="left:1374.8px;top:829.8px;font-size:24px;letter-spacing:0.000px;color:#bbbbbb;transform:scaleX(0.9049);transform-origin:0 0;-webkit-text-stroke:0.45px #3c3f41;">Save:</span>
<span class="t" style="left:1459.9px;top:829.8px;font-size:24px;letter-spacing:0.000px;color:#bbbbbb;transform:scaleX(0.9354);transform-origin:0 0;-webkit-text-stroke:0.45px #3c3f41;">Forever</span>
<span class="t" style="left:1465.3px;top:901.6px;font-size:24px;letter-spacing:0.000px;color:#bbbbbb;font-weight:700;transform:scaleX(0.9528);transform-origin:0 0;-webkit-text-stroke:0.45px #365880;">OK</span>
<span class="t" style="left:1605.2px;top:901.6px;font-size:24px;letter-spacing:0.000px;color:#bbbbbb;transform:scaleX(0.9473);transform-origin:0 0;-webkit-text-stroke:0.45px #4c5052;">Cancel</span>
<span class="t" style="left:80.2px;top:1502.7px;font-size:24px;letter-spacing:-0.161px;color:#bbbbbb;-webkit-text-stroke:0.45px #3c3f41;">@localhost:</span>
<span class="t" style="left:211.5px;top:1502.7px;font-size:24px;letter-spacing:-0.221px;color:#bbbbbb;-webkit-text-stroke:0.45px #3c3f41;">[28000][1045]</span>
<span class="t" style="left:362.6px;top:1502.7px;font-size:24px;letter-spacing:0.000px;color:#bbbbbb;transform:scaleX(0.8514);transform-origin:0 0;-webkit-text-stroke:0.45px #3c3f41;">Access</span>
<span class="t" style="left:438.6px;top:1502.7px;font-size:24px;letter-spacing:-0.184px;color:#bbbbbb;-webkit-text-stroke:0.45px #3c3f41;">denied</span>
<span class="t" style="left:518.3px;top:1502.7px;font-size:24px;letter-spacing:-0.178px;color:#bbbbbb;-webkit-text-stroke:0.45px #3c3f41;">for</span>
<span class="t" style="left:553.8px;top:1502.7px;font-size:24px;letter-spacing:-0.976px;color:#bbbbbb;-webkit-text-stroke:0.45px #3c3f41;">user</span>
<span class="t" style="left:606.8px;top:1502.7px;font-size:24px;letter-spacing:0.005px;color:#bbbbbb;-webkit-text-stroke:0.45px #3c3f41;">'Lenovo'@'localhost'</span>
<span class="t" style="left:831.9px;top:1502.7px;font-size:24px;letter-spacing:-0.363px;color:#bbbbbb;-webkit-text-stroke:0.45px #3c3f41;">(using</span>
<span class="t" style="left:903.9px;top:1502.7px;font-size:24px;letter-spacing:-0.541px;color:#bbbbbb;-webkit-text-stroke:0.45px #3c3f41;">password:</span>
<span class="t" style="left:1014.2px;top:1502.7px;font-size:24px;letter-spacing:0.000px;color:#bbbbbb;transform:scaleX(0.7990);transform-origin:0 0;-webkit-text-stroke:0.45px #3c3f41;">YES).</span>
<span class="t" style="left:1070.6px;top:1502.7px;font-size:24px;letter-spacing:-0.104px;color:#bbbbbb;-webkit-text-stroke:0.45px #3c3f41;">(moments</span>
<span class="t" style="left:1185.6px;top:1502.7px;font-size:24px;letter-spacing:-0.129px;color:#bbbbbb;-webkit-text-stroke:0.45px #3c3f41;">ago)</span>
<span class="t" style="left:2117.7px;top:1502.7px;font-size:24px;letter-spacing:0.000px;color:#bbbbbb;transform:scaleX(0.8596);transform-origin:0 0;-webkit-text-stroke:0.45px #3c3f41;">1:1</span>
<span class="t" style="left:2177.4px;top:1502.7px;font-size:24px;letter-spacing:0.000px;color:#bbbbbb;transform:scaleX(0.8430);transform-origin:0 0;-webkit-text-stroke:0.45px #3c3f41;">CRLF</span>
<span class="t" style="left:2260.8px;top:1502.7px;font-size:24px;letter-spacing:0.000px;color:#bbbbbb;transform:scaleX(0.9375);transform-origin:0 0;-webkit-text-stroke:0.45px #3c3f41;">UTF-8</span>
<span class="t" style="left:2355.3px;top:1502.7px;font-size:24px;letter-spacing:0.000px;color:#bbbbbb;transform:scaleX(1.0001);transform-origin:0 0;-webkit-text-stroke:0.45px #3c3f41;">4</span>
<span class="t" style="left:1018.7px;top:569.0px;font-size:24px;letter-spacing:-2.056px;color:#bbbbbb;-webkit-text-stroke:0.45px #3c3f41;">to</span>
<span class="t" style="left:1045.5px;top:569.0px;font-size:24px;letter-spacing:-0.079px;color:#bbbbbb;-webkit-text-stroke:0.45px #3c3f41;">'@localhost'...</span>
</div>
</body></html>
